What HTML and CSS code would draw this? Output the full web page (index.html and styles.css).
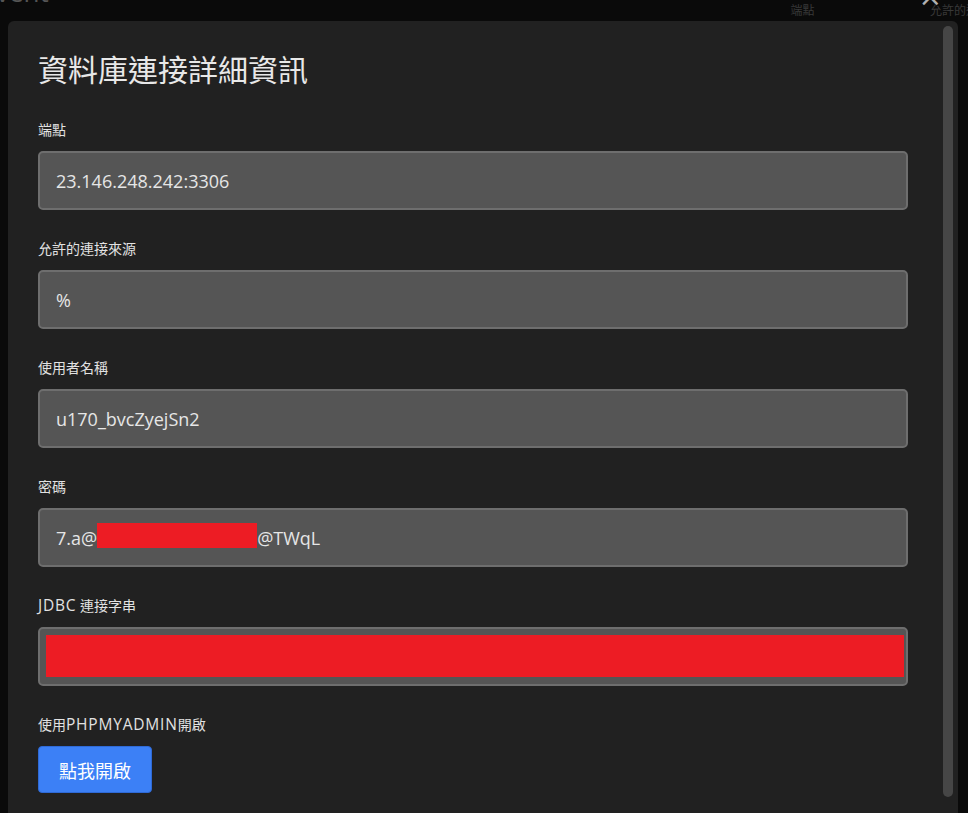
FILE: index.html
```html
<!DOCTYPE html>
<html lang="zh-Hant">
<head>
    <meta charset="UTF-8">
    <meta name="viewport" content="width=device-width, initial-scale=1.0">
    <title>資料庫連接詳細資訊</title>
    <link rel="stylesheet" href="styles.css">
</head>
<body>
    <!-- 被遮罩蓋住的背景頁面 -->
    <div class="backdrop-bar">
        <span class="bg-title">vent</span>
        <span class="bg-spacer"></span>
        <span class="bg-label bg-endpoint">端點</span>
        <span class="bg-close">×</span>
        <span class="bg-label bg-source">允許的連接</span>
    </div>

    <div class="modal">
        <div class="modal-body">
            <h1 class="modal-title">資料庫連接詳細資訊</h1>

            <div class="field">
                <label class="field-label">端點</label>
                <div class="field-value">23.146.248.242:3306</div>
            </div>

            <div class="field">
                <label class="field-label">允許的連接來源</label>
                <div class="field-value">%</div>
            </div>

            <div class="field">
                <label class="field-label">使用者名稱</label>
                <div class="field-value">u170_bvcZyejSn2</div>
            </div>

            <div class="field">
                <label class="field-label">密碼</label>
                <div class="field-value">7.a@<span class="redacted redacted-inline"></span>@TWqL</div>
            </div>

            <div class="field">
                <label class="field-label"><span class="latin">JDBC</span> 連接字串</label>
                <div class="field-value field-value-block">
                    <span class="redacted redacted-block"></span>
                </div>
            </div>

            <div class="field">
                <label class="field-label">使用<span class="latin">PHPMYADMIN</span>開啟</label>
                <button class="open-btn">點我開啟</button>
            </div>
        </div>
        <div class="modal-scrollbar">
            <div class="scroll-thumb"></div>
        </div>
    </div>
</body>
</html>
```

FILE: styles.css
```css
* {
    box-sizing: border-box;
    margin: 0;
    padding: 0;
}

html, body {
    width: 100%;
    height: 100%;
    overflow: hidden;
}

body {
    background-color: #0a0a0a;
    font-family: "Open Sans", "Noto Sans CJK TC", sans-serif;
    color: #e4e4e4;
}

/* 背景頁面殘影 */
.backdrop-bar {
    height: 21px;
    display: flex;
    align-items: flex-start;
    overflow: hidden;
}

.bg-title {
    font-size: 26px;
    line-height: 26px;
    margin-top: -21px;
    margin-left: -4px;
    color: #555;
}

.bg-spacer {
    flex-grow: 1;
}

.bg-label {
    font-size: 12px;
    line-height: 14px;
    margin-top: 4px;
    color: #383838;
    white-space: nowrap;
}

.bg-endpoint {
    margin-right: 104px;
}

.bg-close {
    font-size: 28px;
    line-height: 20px;
    margin-top: -13px;
    margin-right: -12px;
    color: #b0b0b0;
    font-family: "DejaVu Sans", sans-serif;
}

.bg-source {
    margin-right: -22px;
}

/* 對話框 */
.modal {
    margin-left: 8px;
    width: 950px;
    height: 820px;
    background-color: #212121;
    border-radius: 6px 6px 0 0;
    display: flex;
}

.modal-body {
    flex-grow: 1;
    padding: 30px 35px 0 30px;
}

.modal-title {
    font-size: 30px;
    font-weight: normal;
    line-height: 38px;
    color: #e8e8e8;
    margin-bottom: 31px;
}

.field {
    margin-bottom: 29px;
}

.field-label {
    display: block;
    height: 20px;
    font-size: 14px;
    line-height: 20px;
    color: #e2e2e2;
    margin-bottom: 11px;
}

.field-label .latin {
    font-size: 15.5px;
    line-height: 1;
    letter-spacing: 0.8px;
}

.field-value {
    height: 59px;
    display: flex;
    align-items: center;
    padding: 0 16px;
    background-color: #555555;
    border: 2px solid #6e6e6e;
    border-radius: 5px;
    font-size: 18px;
    color: #e6e6e6;
    white-space: nowrap;
}

.field-value-block {
    padding: 6px 2px 7px 6px;
    align-items: stretch;
}

.redacted {
    background-color: #ed1c24;
}

.redacted-inline {
    display: inline-block;
    width: 160px;
    height: 25px;
    margin-top: -5px;
}

.redacted-block {
    display: block;
    flex-grow: 1;
}

/* 開啟按鈕 */
.open-btn {
    width: 114px;
    height: 47px;
    background-color: #3c80f6;
    border: 1px solid #2f6ad6;
    border-radius: 4px;
    color: #ffffff;
    font-family: "Noto Sans CJK TC", sans-serif;
    font-size: 18px;
    cursor: pointer;
}

/* 捲軸 */
.modal-scrollbar {
    width: 15px;
    padding: 5px 5px 0 0;
}

.scroll-thumb {
    width: 10px;
    height: 771px;
    background-color: #464646;
    border-radius: 5px;
}
```
